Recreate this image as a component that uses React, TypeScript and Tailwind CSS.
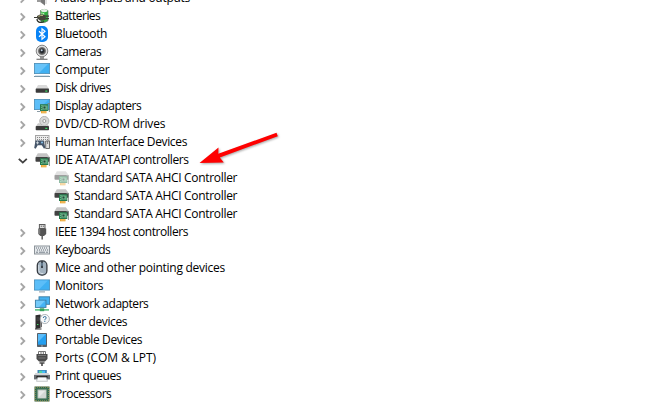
import React from "react";

interface Device {
  label: string;
  icon: React.ReactNode;
  tracking: string;
  open?: boolean;
  children?: { label: string; faded?: boolean }[];
}

const Svg = ({ children, className = "" }: { children: React.ReactNode; className?: string }) => (
  <svg viewBox="0 0 16 16" className={`w-4 h-4 shrink-0 ${className}`} fill="none">
    {children}
  </svg>
);

const AudioIcon = () => (
  <Svg>
    <path d="M3 6h3l5-5v14.5L6 12H3z" fill="#9a9a9a" />
    <path d="M7 5l4-4v14.5L7 12z" fill="#777" />
    <path d="M12 2v12" stroke="#b5b5b5" strokeWidth=".8" />
  </Svg>
);

const BatteryIcon = () => (
  <Svg>
    <path d="M6.5 2.5Q10 .2 14 2.5v10.3q-3 2.7-7 1.2z" fill="#2fae3f" stroke="#5f7562" strokeWidth=".7" />
    <ellipse cx="10.2" cy="2.6" rx="3.2" ry="1.6" fill="#e4efe4" />
    <path d="M8 4.5v3.2M9.6 5v2.5" stroke="#b9f3b0" strokeWidth="1.2" />
    <path d="M0 9.5h4M11.5 8.2h3.5M11.5 10.6h3.5" stroke="#3a3a35" strokeWidth="1.2" />
    <path d="M3 8l3-1.6h3.5l2.3 1v4l-2.3 1H6l-3-2.2z" fill="#45453a" />
    <path d="M4.5 8.5l2-1h2.5" stroke="#b4b078" />
    <path d="M3 11c0 4 5 4 7 2.5" stroke="#2d3029" strokeWidth="1.2" />
  </Svg>
);

const BluetoothIcon = () => (
  <Svg>
    <rect x="2" y="0" width="12" height="16" rx="5" fill="#0883f5" />
    <path d="M5 5.2l6 5.5-3 2.6V2.8l3 2.5-6 5.5" stroke="#fff" strokeWidth="1.2" />
  </Svg>
);

const CameraIcon = () => (
  <Svg>
    <path d="M6 12h4v3H6z" fill="#999" />
    <path d="M2.5 15.3h11" stroke="#777" strokeWidth="1.2" />
    <circle cx="8" cy="7" r="5.8" fill="#dedede" stroke="#858585" />
    <circle cx="8" cy="7" r="3.5" fill="#494949" stroke="#777" />
    <circle cx="8" cy="7" r="2" fill="#20252c" />
    <circle cx="7.7" cy="6.3" r="1" fill="#c2d3e2" />
  </Svg>
);

const ComputerIcon = () => (
  <Svg>
    <rect x=".4" y="1.4" width="15.2" height="10.2" fill="#3fb0f2" stroke="#4d8db5" strokeWidth=".8" />
    <path d="M1 2h13L5 11H1z" fill="#68c3f8" />
    <path d="M0 14.5h16" stroke="#7893a3" />
    <path d="M1 13.6h14" stroke="#c9dce8" strokeWidth=".8" />
  </Svg>
);

const MonitorIcon = () => (
  <Svg>
    <rect x=".4" y="1.9" width="15.2" height="10.2" fill="#3fb0f2" stroke="#4d8db5" strokeWidth=".8" />
    <path d="M1 2.4h13L5 11.6H1z" fill="#5cbef8" />
    <path d="M5 13.9h6" stroke="#8b9ba5" />
  </Svg>
);

const DiskIcon = () => (
  <Svg>
    <path d="M4 5h8.5L15 9H1.7z" fill="#dadada" />
    <rect x="1.7" y="8.6" width="13.3" height="4.2" rx=".8" fill="#3b3b3b" />
    <rect x="11.3" y="10.5" width="2" height="1.2" fill="#35df62" />
  </Svg>
);

const Card = () => (
  <>
    <rect x="6" y="6.2" width="8.3" height="6.8" fill="#287a4e" />
    <path d="M7 7.8h1.8M7 9.6h1M7 11.6h1.5M13 7.5v4.5" stroke="#7bc69a" strokeWidth=".9" />
    <rect x="9" y="8" width="3" height="3" fill="#1d4f38" stroke="#9bd0ae" strokeWidth=".7" />
    <path d="M7 13h5.5v2.3H7z" fill="#eba635" />
    <path d="M9 13v2.3M11 13v2.3" stroke="#f8d797" strokeWidth=".6" />
    <path d="M13.5 5.5h1.9V14" stroke="#7b8580" strokeWidth=".9" />
  </>
);

const DisplayIcon = () => (
  <Svg>
    <rect x=".4" y="1.4" width="15.2" height="10.2" fill="#3fb0f2" stroke="#4d8db5" strokeWidth=".8" />
    <path d="M1 2h13L5 11H1z" fill="#5cbef8" />
    <path d="M3 13.5h3.5" stroke="#8b9ba5" />
    <Card />
  </Svg>
);

const ControllerIcon = ({ faded = false }: { faded?: boolean }) => (
  <Svg className={faded ? "opacity-50" : ""}>
    <path d="M3.8 1.3h9L15.8 5.3H1.5z" fill="#c4c4c4" />
    <rect x="1.5" y="5" width="14.2" height="4.7" rx=".8" fill="#424242" />
    <Card />
  </Svg>
);

const DvdIcon = () => (
  <Svg>
    <circle cx="10.3" cy="5" r="4.6" fill="#d8d8d8" stroke="#a6a6a6" strokeWidth=".8" />
    <circle cx="10.3" cy="5" r="1.5" fill="#fff" stroke="#888" strokeWidth=".8" />
    <path d="M4 7.3h2q1 2.3 4.3 2.3T14 8.5l1 2H1.7z" fill="#c9c9c9" />
    <rect x="1.7" y="10" width="13.3" height="4.3" rx=".8" fill="#3b3b3b" />
    <rect x="11.3" y="11.8" width="2" height="1.2" fill="#35df62" />
  </Svg>
);

const HidIcon = () => (
  <Svg>
    <rect x="1.5" y="1.5" width="13.5" height="6.5" fill="#ececec" stroke="#a5a5a5" />
    <path d="M3 3.5h11M3 5.5h11" stroke="#888" strokeDasharray="1 1" />
    <path d="M1.5 6.5h8.3l1.5 7.2-1.3 1-2.2-3.4H3.7l-2 3.4-1.5-.7z" fill="#46566a" />
    <path d="M2 8.8h3M3.5 7.3v3" stroke="#dce4ea" strokeWidth=".8" />
    <circle cx="8" cy="8.6" r="1" fill="#87c0ea" />
    <path d="M11.7 7h3.8v7.5h-3.8z" fill="#dedede" stroke="#5f5f5f" strokeWidth=".9" />
    <path d="M13.6 7v3" stroke="#666" strokeWidth=".8" />
  </Svg>
);

const PlugIcon = () => (
  <Svg>
    <rect x="5.4" y=".5" width="5.6" height="4" fill="#dcdcdc" stroke="#5d5d5d" />
    <path d="M6.8 2.2h1M8.8 2.2h1" stroke="#444" />
    <path d="M4.3 4.5h7.9V10L10 12H6.3l-2-2z" fill="#555" />
    <path d="M5.7 5v5" stroke="#858585" />
    <path d="M8.2 12v3.5" stroke="#666" strokeWidth="1.6" />
  </Svg>
);

const KeyboardIcon = () => (
  <Svg>
    <rect x=".5" y="4" width="15" height="8" fill="#e3e7ea" stroke="#8c9399" />
    <path d="M2 6h12M3 8h11" stroke="#68717a" strokeDasharray="1 1" />
    <path d="M2 10.2h2M5 10.2h6M12 10.2h2" stroke="#77808a" />
  </Svg>
);

const MouseIcon = () => (
  <Svg>
    <rect x="3.3" y=".8" width="9.6" height="14.4" rx="4.4" fill="#a3b2bf" stroke="#353a40" strokeWidth="1.3" />
    <path d="M4.8 5v5.5c.3 2.5 3 3.5 4.5 3" stroke="#d8e1e8" />
    <path d="M8 1v7" stroke="#3c444c" strokeWidth="2" />
    <path d="M8 2.8v3" stroke="#9ccbf0" strokeWidth=".8" />
  </Svg>
);

const NetworkIcon = () => (
  <Svg>
    <rect x="5" y=".8" width="10.6" height="7.5" fill="#45b2f1" stroke="#3e7da3" strokeWidth=".9" />
    <rect x="1.4" y="4.2" width="10.6" height="7.2" fill="#45b4f5" stroke="#3e7da3" strokeWidth=".9" />
    <path d="M2 4.8h9L5 10.9H2z" fill="#74caf9" />
    <path d="M1 13.9h14" stroke="#43b86b" strokeWidth="1.4" />
    <path d="M5.8 12.3h4.4v2.9H5.8z" fill="#35a35c" />
  </Svg>
);

const OtherIcon = () => (
  <Svg>
    <path d="M1.5 1.2l5-.7v13.5l-5 1z" fill="#2e2e2e" />
    <path d="M6.5 1L8 2v11l-1.5.7z" fill="#6a6a6a" />
    <path d="M2.5 4h3M2.5 6h3" stroke="#666" strokeWidth=".6" />
    <path d="M3 10.5h1.4" stroke="#48e169" />
    <path d="M1 15h6.5" stroke="#333" />
    <circle cx="10.8" cy="5" r="4.6" fill="#f7f8f9" stroke="#9da4aa" strokeWidth=".8" />
    <path d="M9.3 4q0-1.5 1.5-1.5T12.2 4q0 .8-1.4 1.5v.8M10.8 7v1" stroke="#286995" strokeWidth=".9" />
  </Svg>
);

const PortableIcon = () => (
  <Svg>
    <rect x="3" y="1" width="10" height="14" rx=".7" fill="#566069" />
    <rect x="4" y="2" width="8" height="10.7" fill="#259ff0" />
    <path d="M4 2h8L4 10z" fill="#5bbcf9" />
    <path d="M7 14h2" stroke="#cbd1d5" strokeWidth=".7" />
  </Svg>
);

const PortIcon = () => (
  <Svg>
    <path d="M4.5 4V1.5h7V4M7 1v3M9.3 1v3" stroke="#777" />
    <path d="M2.5 4h11v5L11 11.5H5L2.5 9z" fill="#4b4b4b" />
    <path d="M4 5.5h8M4.5 8h7" stroke="#7d7d7d" strokeWidth=".9" />
    <path d="M5.5 11.5h5V14h-5z" fill="#777" />
    <path d="M8 13v3" stroke="#444" strokeWidth="1.6" />
  </Svg>
);

const PrinterIcon = () => (
  <Svg>
    <path d="M3.5 2h9.3v4H3.5z" fill="#3f86b8" />
    <path d="M5 2.8h3V5H5z" fill="#54d5a0" />
    <path d="M8 2.8h3V5H8z" fill="#47c0f8" />
    <path d="M1.5 5h13L16 7v4.5H0V7z" fill="#d2d5d7" />
    <path d="M0 7h16v4.3H0z" fill="#6a6f74" />
    <path d="M2.5 8h11v2h-11z" fill="#1e1e1e" />
    <path d="M3.8 9.3h8.4l1.3 4h-11z" fill="#f8f9fa" stroke="#a2a6a9" strokeWidth=".6" />
  </Svg>
);

const ProcessorIcon = () => (
  <Svg>
    <rect x="1" y="1" width="14" height="14" fill="#3b7053" stroke="#2c5a44" />
    <rect x="1" y="1" width="14" height="14" stroke="#b9ad68" strokeDasharray="1 1" />
    <rect x="4" y="4" width="8" height="8" fill="#e8eae8" stroke="#b9c2bb" />
    <path d="M4.5 11.5l7-7v7z" fill="#d3d8d4" />
  </Svg>
);

const devices: Device[] = [
  { label: "Audio inputs and outputs", icon: <AudioIcon />, tracking: "tracking-[-0.29px]" },
  { label: "Batteries", icon: <BatteryIcon />, tracking: "tracking-[-0.54px]" },
  { label: "Bluetooth", icon: <BluetoothIcon />, tracking: "tracking-[-0.35px]" },
  { label: "Cameras", icon: <CameraIcon />, tracking: "tracking-[-0.43px]" },
  { label: "Computer", icon: <ComputerIcon />, tracking: "tracking-[-0.28px]" },
  { label: "Disk drives", icon: <DiskIcon />, tracking: "tracking-[-0.45px]" },
  { label: "Display adapters", icon: <DisplayIcon />, tracking: "tracking-[-0.44px]" },
  { label: "DVD/CD-ROM drives", icon: <DvdIcon />, tracking: "tracking-[-0.19px]" },
  { label: "Human Interface Devices", icon: <HidIcon />, tracking: "tracking-[-0.35px]" },
  {
    label: "IDE ATA/ATAPI controllers",
    icon: <ControllerIcon />,
    tracking: "tracking-[-0.4px]",
    open: true,
    children: [
      { label: "Standard SATA AHCI Controller", faded: true },
      { label: "Standard SATA AHCI Controller" },
      { label: "Standard SATA AHCI Controller" },
    ],
  },
  { label: "IEEE 1394 host controllers", icon: <PlugIcon />, tracking: "tracking-[-0.46px]" },
  { label: "Keyboards", icon: <KeyboardIcon />, tracking: "tracking-[-0.44px]" },
  { label: "Mice and other pointing devices", icon: <MouseIcon />, tracking: "tracking-[-0.26px]" },
  { label: "Monitors", icon: <MonitorIcon />, tracking: "tracking-[-0.28px]" },
  { label: "Network adapters", icon: <NetworkIcon />, tracking: "tracking-[-0.45px]" },
  { label: "Other devices", icon: <OtherIcon />, tracking: "tracking-[-0.38px]" },
  { label: "Portable Devices", icon: <PortableIcon />, tracking: "tracking-[-0.38px]" },
  { label: "Ports (COM & LPT)", icon: <PortIcon />, tracking: "tracking-[-0.08px]" },
  { label: "Print queues", icon: <PrinterIcon />, tracking: "tracking-[-0.42px]" },
  { label: "Processors", icon: <ProcessorIcon />, tracking: "tracking-[-0.48px]" },
];

const Chevron = ({ open }: { open?: boolean }) => (
  <svg viewBox="0 0 10 10" className="w-2.5 h-2.5 mt-0.5 mr-1.5 shrink-0" fill="none">
    {open ? (
      <path d="M.8 2.8L4.8 6.6l4-3.8" stroke="#404040" strokeWidth="1.8" />
    ) : (
      <path d="M2.7 1.3L6.3 5 2.7 8.7" stroke="#a6a6a6" strokeWidth="1.9" />
    )}
  </svg>
);

const DeviceRow = ({ device }: { device: Device }) => (
  <li>
    <div className="flex items-center h-[18px] pl-[18px]">
      <Chevron open={device.open} />
      {device.icon}
      <span className={`ml-[5px] ${device.tracking}`}>{device.label}</span>
    </div>
    {device.children && (
      <ul>
        {device.children.map((child, index) => (
          <li key={index} className="flex items-center h-[18px] pl-[53px]">
            <ControllerIcon faded={child.faded} />
            <span className="ml-[5px] tracking-[-0.32px]">{child.label}</span>
          </li>
        ))}
      </ul>
    )}
  </li>
);

function App() {
  return (
    <div className="relative w-full h-[403px] overflow-hidden bg-white text-black text-[12px] leading-[18px] whitespace-nowrap font-['Open_Sans','Noto_Sans',sans-serif]">
      <ul className="-mt-[11px]">
        {devices.map((device) => (
          <DeviceRow key={device.label} device={device} />
        ))}
      </ul>
      <svg viewBox="0 0 80 34" className="absolute left-[199px] top-[131px] w-[80px] h-[34px] drop-shadow-[1px_1px_1px_rgba(0,0,0,0.35)]">
        <path d="M.5 32L19.5 16.5l-.2 6.2L77.5 1.8l1.3 3.4-58 21.2 4 5.2z" fill="#fe0000" />
      </svg>
    </div>
  );
}

export default App;
